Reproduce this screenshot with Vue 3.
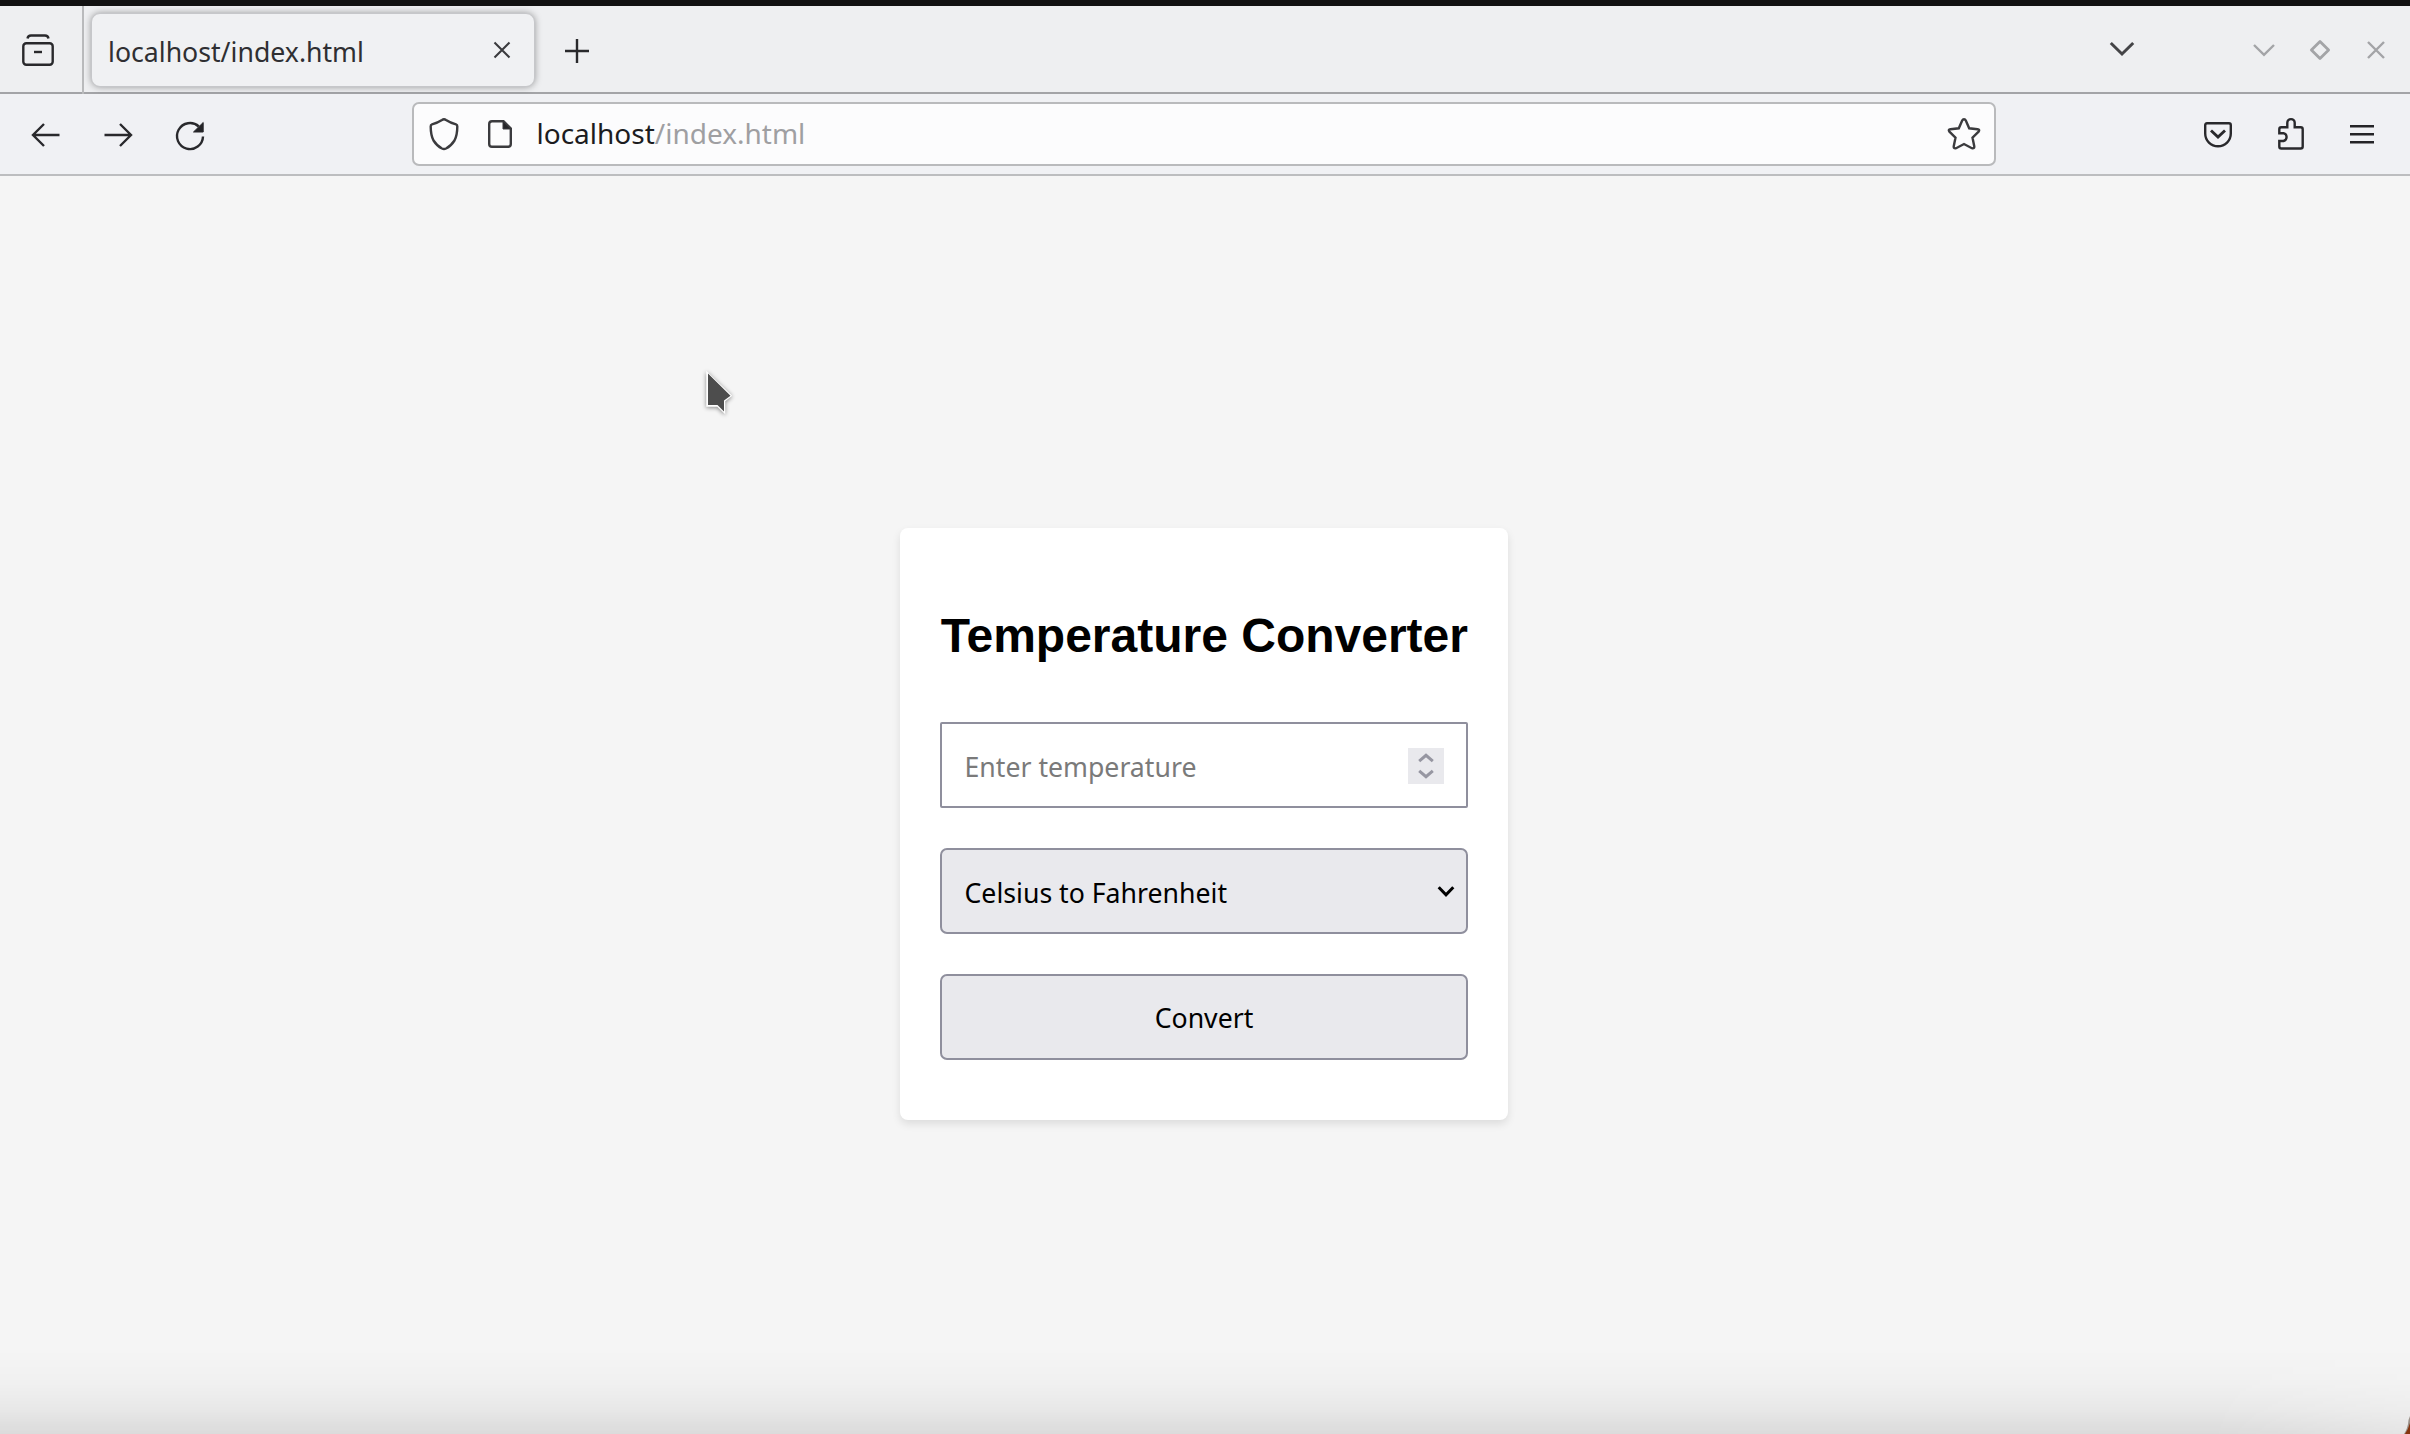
<script setup>
import { ref } from 'vue'

const pageTitle = ref('localhost/index.html')
const direction = ref('Celsius to Fahrenheit')
</script>

<template>
  <div class="window">
    <header class="tabs">
      <div class="recent">
        <svg width="36" height="36" viewBox="0 0 36 36" class="line">
          <path d="M7.5 6.5Q8 3.500 11 3.500H25Q28 3.500 28.500 6.500" />
          <rect x="3.300" y="11.300" width="29.400" height="21.400" rx="3" />
          <path d="M14 20H22" />
        </svg>
      </div>
      <div class="tab">
        <span class="tab-title">{{ pageTitle }}</span>
        <svg width="18" height="18" viewBox="0 0 18 18" class="line tab-close"><path d="M1.500 1.500L16.500 16.500M16.500 1.500L1.500 16.500" /></svg>
      </div>
      <svg width="26" height="26" viewBox="0 0 26 26" class="line new-tab"><path d="M13 1V25M1 13H25" /></svg>
      <div class="grow"></div>
      <svg width="26" height="16" viewBox="0 0 26 16" class="line all-tabs"><path d="M1.800 2L13 13L24.200 2" /></svg>
      <div class="controls">
        <svg width="24" height="14" viewBox="0 0 24 14"><path d="M2 2L12 11.800L22 2" /></svg>
        <svg width="24" height="24" viewBox="0 0 24 24"><path d="M12 3.400L20.600 12L12 20.600L3.400 12Z" stroke-linejoin="round" stroke-width="2.800" /></svg>
        <svg width="20" height="20" viewBox="0 0 20 20"><path d="M2 2L18 18M18 2L2 18" /></svg>
      </div>
    </header>

    <nav class="toolbar">
      <svg width="32" height="28" viewBox="0 0 32 28" class="line back"><path d="M29.500 14H2.500M14 3L3 14L14 25" /></svg>
      <svg width="32" height="28" viewBox="0 0 32 28" class="line forward"><path d="M2.500 14H29.500M18 3L29 14L18 25" /></svg>
      <svg width="32" height="32" viewBox="0 0 32 32" class="line reload">
        <path d="M29 16.500A13 13 0 1 1 24.800 6.500" />
        <path d="M29.200 2.500V12H19.500Z" class="solid" />
      </svg>
      <div class="address">
        <svg width="32" height="36" viewBox="0 0 32 36" class="line shield">
          <path d="M16 3.200Q17 3.200 18 3.900Q22.500 6.800 28 8.300Q29.400 8.800 29.300 10.500Q29.300 19 26.500 24.500Q23 30 18 32.500Q16 33.400 14 32.500Q9 30 5.500 24.500Q2.700 19 2.700 10.500Q2.600 8.800 4 8.300Q9.500 6.800 14 3.900Q15 3.200 16 3.200Z" />
        </svg>
        <svg width="28" height="32" viewBox="0 0 28 32" class="line doc">
          <path d="M17.500 3.200H6Q3.200 3.200 3.200 6V26Q3.200 28.800 6 28.800H22Q24.800 28.800 24.800 26V10.500Z" />
          <path d="M17 3.200V11H24.800Z" class="solid" />
        </svg>
        <div class="url">localhost<span>/index.html</span></div>
        <svg width="36" height="36" viewBox="0 0 36 36" class="line star">
          <path d="M18 3.200Q19.200 3.200 19.800 4.500L23.200 12.300L31.500 13.200Q34.200 13.700 32.600 15.700L26.500 21.700L28.300 30.400Q28.500 33 25.900 32.200L18 28L10.100 32.200Q7.500 33 7.700 30.400L9.500 21.700L3.400 15.700Q1.800 13.700 4.500 13.200L12.800 12.300L16.200 4.500Q16.800 3.200 18 3.200Z" />
        </svg>
      </div>
      <div class="grow"></div>
      <svg width="32" height="30" viewBox="0 0 32 30" class="line pocket">
        <path d="M5 3.300H27Q28.800 3.300 28.800 5.200V13.500A12.800 12.800 0 0 1 3.200 13.500V5.200Q3.200 3.300 5 3.300Z" />
        <path d="M9 10.500L16 17L23 10.500" stroke-width="2.900" />
      </svg>
      <svg width="30" height="36" viewBox="0 0 30 36" class="line puzzle">
        <path d="M5.300 11.300H11.300V6.800A3.700 3.700 0 0 1 18.700 6.800V11.300H24.700Q26.700 11.300 26.700 13.300V30.500Q26.700 32.500 24.700 32.500H5.300Q3.300 32.500 3.300 30.500V25H7.500A4 4 0 0 0 7.500 17.200H3.300V13.300Q3.300 11.300 5.300 11.300Z" />
      </svg>
      <svg width="26" height="22" viewBox="0 0 26 22" class="menu"><path d="M1 3.300H25M1 11.300H25M1 19.300H25" /></svg>
    </nav>

    <main class="page">
      <section class="card">
        <h1>Temperature Converter</h1>
        <div class="field input">
          <span>Enter temperature</span>
          <div class="spinner">
            <svg width="36" height="36" viewBox="0 0 36 36"><path d="M11.200 13.200L18 7.300L24.800 13.200M11.200 22.800L18 28.700L24.800 22.800" /></svg>
          </div>
        </div>
        <div class="field select">
          <span>{{ direction }}</span>
          <svg width="18" height="14" viewBox="0 0 18 14"><path d="M1.700 2.300L9 9.800L16.300 2.300" /></svg>
        </div>
        <button class="field button" type="button">Convert</button>
      </section>
    </main>

    <div class="bottom-shade"></div>
    <svg class="corner" width="6" height="18" viewBox="0 0 6 18"><path d="M6 0V18H0Q4 12 4.500 4Z" fill="#9a9089" /><path d="M6 7V18H1Q4 14 6 7Z" fill="#86340f" /></svg>
    <svg class="pointer" width="40" height="56" viewBox="700 364 40 56">
      <path d="M707 372.500V406H717.500L724.500 412.500V401L731 395.800Z" fill="#fff" stroke="#fff" stroke-width="1.500" />
      <path d="M708 373.500V405H717.500L724 411.500V400.500L730.500 395.800Z" fill="#4d4d4d" />
    </svg>
  </div>
</template>

<style>
body {
  margin: 0;
  overflow: hidden;
}
</style>

<style scoped>
.window {
  position: relative;
  box-sizing: border-box;
  width: 2410px;
  height: 1434px;
  display: flex;
  flex-direction: column;
  border-top: 6px solid #121212;
  background: #f5f5f5;
  font-family: "Noto Sans", sans-serif;
  overflow: hidden;
}
svg {
  display: block;
  flex: none;
  fill: none;
}
.line {
  stroke: #29292c;
  stroke-width: 2.4;
}
.line .solid {
  fill: #242427;
  stroke-width: 1;
}
.grow {
  flex: 1;
}
.tabs {
  box-sizing: border-box;
  height: 88px;
  flex: none;
  display: flex;
  align-items: flex-start;
  background: #eeeff1;
  border-bottom: 2px solid #a3a4a7;
}
.recent {
  box-sizing: border-box;
  width: 84px;
  height: 88px;
  padding: 26px 0 0 20px;
  border-right: 2px solid #b9babc;
}
.tab {
  box-sizing: border-box;
  width: 444px;
  height: 74px;
  margin: 7px 0 0 7px;
  padding: 0 23px 0 16px;
  display: flex;
  align-items: center;
  justify-content: space-between;
  background: #f0f1f3;
  border: 1px solid #c6c7ca;
  border-radius: 9px;
  box-shadow: 0 0 7px rgba(0, 0, 0, 0.36);
}
.tab-title {
  font-size: 26.67px;
  line-height: 36px;
  color: #2f2f32;
  margin-top: 4px;
}
.tab-close {
  stroke: #3b3b3e;
  stroke-width: 2.1;
}
.new-tab {
  margin: 32px 0 0 29px;
}
.all-tabs {
  margin: 35px 117px 0 0;
  stroke: #444447;
  stroke-width: 3;
}
.controls {
  display: flex;
  align-items: center;
  height: 88px;
  margin-right: 24px;
  stroke: #a3a4a7;
  stroke-width: 2.4;
}
.controls svg:nth-child(2) {
  margin: 0 34px 0 32px;
}
.toolbar {
  box-sizing: border-box;
  height: 82px;
  flex: none;
  display: flex;
  align-items: center;
  background: #f0f1f4;
  border-bottom: 2px solid #bcbdbf;
}
.back {
  margin: 2px 0 0 30px;
}
.forward {
  margin: 2px 0 0 40px;
}
.reload {
  margin: 4px 0 0 40px;
}
.address {
  box-sizing: border-box;
  width: 1584px;
  height: 64px;
  margin-left: 206px;
  padding: 0 12px 0 14px;
  display: flex;
  align-items: center;
  background: #fcfcfd;
  border: 2px solid #b9babc;
  border-radius: 7px;
}
.address .line {
  stroke: #3b3b3e;
}
.doc {
  margin-left: 26px;
}
.url {
  flex: 1;
  margin: -2px 0 0 22.5px;
  font-size: 28px;
  line-height: 38px;
  color: #1c1c1f;
}
.url span {
  color: #9f9fa2;
}
.pocket {
  margin: 1px 42px 0 0;
}
.puzzle {
  margin-right: 43px;
}
.menu {
  margin: 0 35px 0 0;
  stroke: #242427;
  stroke-width: 2.6;
}
.page {
  flex: 1;
  display: flex;
  flex-direction: column;
  align-items: center;
  padding-top: 352px;
  padding-right: 2px;
}
.card {
  box-sizing: border-box;
  width: 608px;
  height: 592px;
  padding: 81px 40px 60px;
  display: flex;
  flex-direction: column;
  background: #fff;
  border-radius: 8px;
  box-shadow: 0 4px 8px rgba(0, 0, 0, 0.1);
}
h1 {
  margin: 0 0 59px;
  padding-left: 0.7px;
  font-family: "Liberation Sans", sans-serif;
  font-size: 48px;
  line-height: 54px;
  font-weight: 700;
  color: #000;
  white-space: nowrap;
}
.field {
  box-sizing: border-box;
  height: 86px;
  flex: none;
  display: flex;
  align-items: center;
  justify-content: space-between;
  margin-bottom: 40px;
  padding: 0 22px 0 22.5px;
  border: 2px solid #8f8f9d;
  border-radius: 7px;
  background: #e9e9ed;
  font-family: "Noto Sans", sans-serif;
  font-size: 26.67px;
  line-height: 36px;
  color: #000;
}
.input {
  border-radius: 2px;
  background: #fff;
  color: #7a7a7a;
}
.input span,
.select span {
  margin-top: 3px;
}
.spinner {
  width: 36px;
  height: 36px;
  margin-top: 2px;
  background: #e9e9ed;
  stroke: #9696a1;
  stroke-width: 3;
}
.select {
  padding-right: 11px;
}
.select svg {
  margin-top: 2px;
  stroke: #000;
  stroke-width: 3;
}
.button {
  justify-content: center;
  padding: 2px 22px 0;
  margin-bottom: 0;
}
.bottom-shade {
  position: absolute;
  left: 0;
  right: 0;
  bottom: 0;
  height: 84px;
  background: linear-gradient(to bottom, rgba(0, 0, 0, 0), rgba(0, 0, 0, 0.018) 40%, rgba(0, 0, 0, 0.05) 70%, rgba(0, 0, 0, 0.105));
  mask-image: linear-gradient(to right, #000 2210px, rgba(0, 0, 0, 0.6) 2410px);
}
.corner {
  position: absolute;
  right: 0;
  bottom: 0;
}
.pointer {
  position: absolute;
  left: 700px;
  top: 358px;
  filter: drop-shadow(0 1px 2px rgba(0, 0, 0, 0.45));
}
</style>
